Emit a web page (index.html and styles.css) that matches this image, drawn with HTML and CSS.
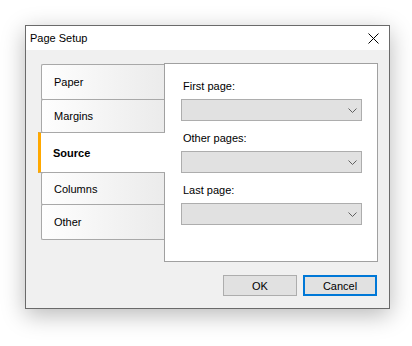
FILE: index.html
```html
<!DOCTYPE html>
<html lang="en">
<head>
  <meta charset="UTF-8" />
  <meta name="viewport" content="width=device-width, initial-scale=1.0"/>
  <title>Page Setup</title>
  <link rel="stylesheet" href="styles.css">
</head>
<body>

  <div class="dialog">
    <!-- Title bar -->
    <div class="titlebar">
      <span class="title">Page Setup</span>
      <svg class="close" width="11" height="11" viewBox="0 0 11 11">
        <path d="M0.5 0.5 L10.5 10.5 M10.5 0.5 L0.5 10.5" stroke="#000" stroke-width="1" fill="none"/>
      </svg>
    </div>

    <div class="dialog-body">
      <div class="main">
        <!-- Tabs -->
        <div class="tabs">
          <div class="tab first">Paper</div>
          <div class="tab">Margins</div>
          <div class="tab active">Source</div>
          <div class="tab">Columns</div>
          <div class="tab last">Other</div>
        </div>

        <!-- Source page -->
        <div class="panel">
          <div class="field">
            <div class="label">First page:</div>
            <div class="combo">
              <svg width="9" height="5" viewBox="0 0 9 5"><path d="M0.5 0.5 L4.5 4.5 L8.5 0.5" stroke="#606060" fill="none"/></svg>
            </div>
          </div>
          <div class="field">
            <div class="label">Other pages:</div>
            <div class="combo">
              <svg width="9" height="5" viewBox="0 0 9 5"><path d="M0.5 0.5 L4.5 4.5 L8.5 0.5" stroke="#606060" fill="none"/></svg>
            </div>
          </div>
          <div class="field">
            <div class="label">Last page:</div>
            <div class="combo">
              <svg width="9" height="5" viewBox="0 0 9 5"><path d="M0.5 0.5 L4.5 4.5 L8.5 0.5" stroke="#606060" fill="none"/></svg>
            </div>
          </div>
        </div>
      </div>

      <div class="buttons">
        <button class="btn">OK</button>
        <button class="btn default">Cancel</button>
      </div>
    </div>
  </div>

</body>
</html>
```

FILE: styles.css
```css
body {
  margin: 0;
  padding: 25px 0 0 25px;
  min-height: 100vh;
  box-sizing: border-box;
  background: #fff;
  font-family: "Liberation Sans", Arial, sans-serif;
  font-size: 11px;
  color: #000;
}

.dialog {
  box-sizing: border-box;
  width: 365px;
  height: 284px;
  border: 1px solid #6a6a6a;
  background: #f0f0f0;
  box-shadow: 0 6px 22px rgba(0, 0, 0, 0.28);
}

.titlebar {
  height: 24px;
  background: #fff;
  display: flex;
  align-items: center;
  justify-content: space-between;
  padding: 0 10px 0 4px;
}

.title {
  font-size: 11px;
}

.close {
  display: block;
  margin-top: 1px;
}

.dialog-body {
  padding: 13px 11px 12px 12px;
}

.main {
  display: flex;
  align-items: flex-start;
}

.tabs {
  width: 126px;
  margin-top: 1px;
}

.tab {
  box-sizing: border-box;
  height: 34px;
  margin: -1px 0 0 3px;
  padding-left: 12px;
  display: flex;
  align-items: center;
  border: 1px solid #a8a8a8;
  border-right: none;
  border-radius: 2px 0 0 2px;
  background: linear-gradient(to right, #fefefe, #ebebeb);
}

.tab.first {
  height: 36px;
  margin-top: 0;
}

.tab:nth-child(4) {
  height: 33px;
}

.tab.last {
  height: 36px;
}

.tab.active {
  position: relative;
  z-index: 1;
  height: 41px;
  margin-left: 0;
  margin-right: -1px;
  border-left: 3px solid #ffa800;
  border-radius: 0;
  background: #fff;
  font-weight: bold;
}

.panel {
  box-sizing: border-box;
  width: 214px;
  height: 199px;
  padding: 14px 15px 0 16px;
  border: 1px solid #a0a0a0;
  background: #fff;
}

.field {
  margin-bottom: 9px;
}

.label {
  height: 16px;
  line-height: 16px;
  padding-left: 2px;
  margin-bottom: 5px;
}

.combo {
  box-sizing: border-box;
  height: 22px;
  display: flex;
  align-items: center;
  justify-content: flex-end;
  padding-right: 4px;
  border: 1px solid #adadad;
  background: #e1e1e1;
}

.combo svg {
  display: block;
}

.buttons {
  display: flex;
  justify-content: flex-end;
  gap: 6px;
  margin-top: 13px;
  padding-right: 1px;
}

.btn {
  box-sizing: border-box;
  width: 74px;
  height: 21px;
  padding: 0;
  border: 1px solid #adadad;
  background: #e1e1e1;
  font-family: "Liberation Sans", Arial, sans-serif;
  font-size: 11px;
  color: #000;
}

.btn.default {
  border: 2px solid #0078d7;
}
```
